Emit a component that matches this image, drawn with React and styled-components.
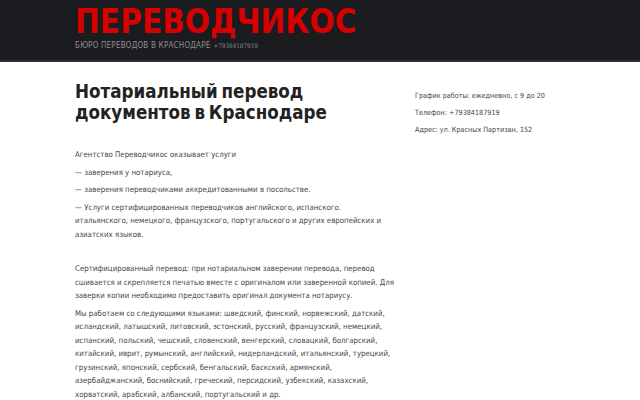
import React from "react";
import styled, { createGlobalStyle } from "styled-components";

const GlobalStyle = createGlobalStyle`
  html, body {
    margin: 0;
    padding: 0;
    background: #fff;
    font-family: "DejaVu Sans Condensed", "DejaVu Sans", sans-serif;
  }
`;

const Header = styled.header`
  background: #1b1c1f;
  border-bottom: 2px solid #2e2f33;
  height: 60px;
  padding: 0 75px;
  display: flex;
  flex-direction: column;
`;

const Logo = styled.a`
  display: block;
  margin-top: 3px;
  color: #d70000;
  font-family: "DejaVu Sans Condensed", "DejaVu Sans", sans-serif;
  font-weight: bold;
  font-size: 33px;
  line-height: 38px;
  text-decoration: none;
`;

const Tagline = styled.div`
  color: #8e8f93;
  font-family: "DejaVu Sans Condensed", "DejaVu Sans", sans-serif;
  font-size: 8px;
  letter-spacing: 0.2px;
  text-transform: uppercase;
  line-height: 10px;
`;

const Phone = styled.span`
  font-family: "DejaVu Serif Condensed", "DejaVu Serif", serif;
  font-size: 6.3px;
  letter-spacing: 0;
  margin-left: 3px;
`;

const Page = styled.div`
  display: grid;
  grid-template-columns: 322px 150px;
  column-gap: 18px;
  padding: 19px 75px 0;
`;

const Main = styled.main`
  color: #444;
`;

const Title = styled.h1`
  margin: 0 0 25px;
  color: #222;
  font-size: 18.6px;
  line-height: 21px;
  font-weight: bold;
  word-spacing: -2px;
`;

const Para = styled.p`
  margin: 0 0 4px;
  font-size: 7.8px;
  line-height: 13.5px;
`;

const Spacer = styled.div`
  height: 17px;
`;

const Aside = styled.aside`
  padding-top: 8px;
  color: #444;
`;

const InfoLine = styled.p`
  margin: 0 0 3.5px;
  font-size: 7.2px;
  line-height: 13.5px;
`;

export default function App() {
  return (
    <>
      <GlobalStyle />
      <Header>
        <Logo href="#">ПЕРЕВОДЧИКОС</Logo>
        <Tagline>
          Бюро переводов в Краснодаре<Phone>+79384187919</Phone>
        </Tagline>
      </Header>
      <Page>
        <Main>
          <Title>
            Нотариальный перевод
            <br />
            документов в Краснодаре
          </Title>
          <Para>Агентство Переводчикос оказывает услуги</Para>
          <Para>— заверения у нотариуса,</Para>
          <Para>— заверения переводчиками аккредитованными в посольстве.</Para>
          <Para>
            — Услуги сертифицированных переводчиков английского, испанского.
            <br />
            итальянского, немецкого, французского, португальского и других
            европейских и азиатских языков.
          </Para>
          <Spacer />
          <Para>
            Сертифицированный перевод: при нотариальном заверении перевода,
            перевод сшивается и скрепляется печатью вместе с оригиналом или
            заверенной копией. Для заверки копии необходимо предоставить
            оригинал документа нотариусу.
          </Para>
          <Para>
            Мы работаем со следующими языками: шведский, финский, норвежский,
            датский, исландский, латышский, литовский, эстонский, русский,
            французский, немецкий, испанский, польский, чешский, словенский,
            венгерский, словацкий, болгарский, китайский, иврит, румынский,
            английский, нидерландский, итальянский, турецкий, грузинский,
            японский, сербский, бенгальский, баскский, армянский,
            азербайджанский, боснийский, греческий, персидский, узбекский,
            казахский, хорватский, арабский, албанский, португальский и др.
          </Para>
        </Main>
        <Aside>
          <InfoLine>График работы: ежедневно, с 9 до 20</InfoLine>
          <InfoLine>Телефон: +79384187919</InfoLine>
          <InfoLine>Адрес: ул. Красных Партизан, 152</InfoLine>
        </Aside>
      </Page>
    </>
  );
}
